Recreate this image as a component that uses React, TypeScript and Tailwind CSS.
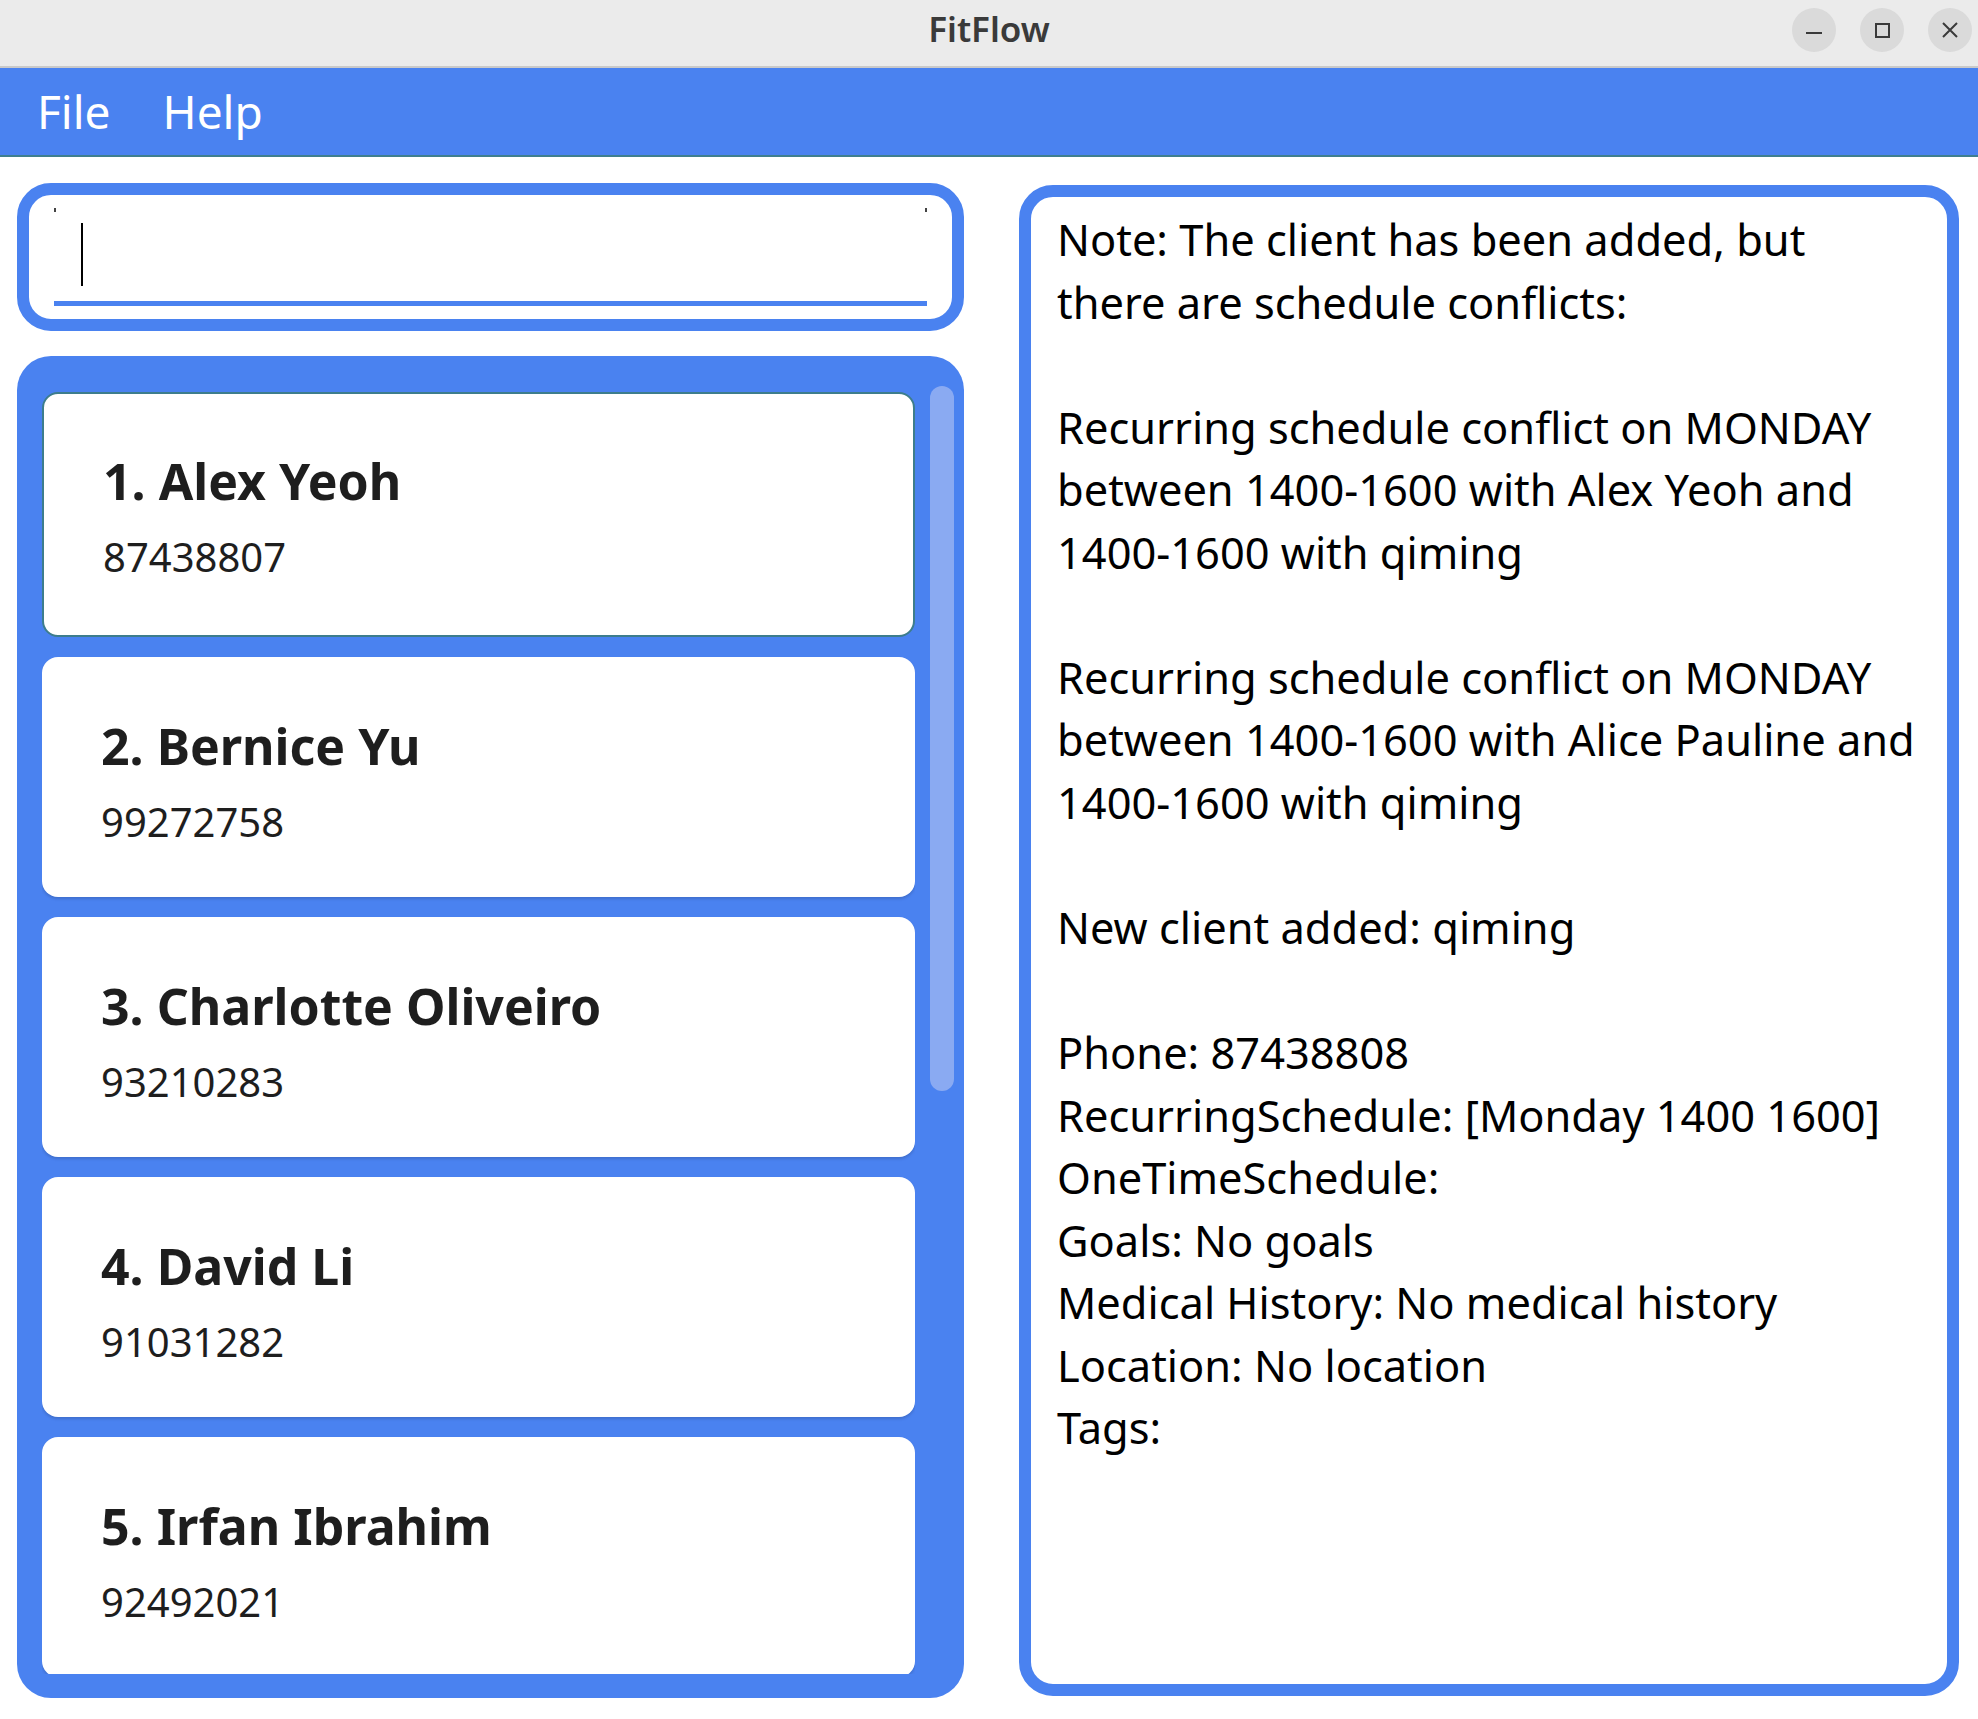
const clients = [
  { id: 1, name: 'Alex Yeoh', phone: '87438807' },
  { id: 2, name: 'Bernice Yu', phone: '99272758' },
  { id: 3, name: 'Charlotte Oliveiro', phone: '93210283' },
  { id: 4, name: 'David Li', phone: '91031282' },
  { id: 5, name: 'Irfan Ibrahim', phone: '92492021' },
];

const resultLines = [
  'Note: The client has been added, but',
  'there are schedule conflicts:',
  '',
  'Recurring schedule conflict on MONDAY',
  'between 1400-1600 with Alex Yeoh and',
  '1400-1600 with qiming',
  '',
  'Recurring schedule conflict on MONDAY',
  'between 1400-1600 with Alice Pauline and',
  '1400-1600 with qiming',
  '',
  'New client added: qiming',
  '',
  'Phone: 87438808',
  'RecurringSchedule: [Monday 1400 1600]',
  'OneTimeSchedule:',
  'Goals: No goals',
  'Medical History: No medical history',
  'Location: No location',
  'Tags:',
];

function TitleBar() {
  return (
    <div className="flex h-[68px] items-start border-b-2 border-[#c9c9c9] bg-[#ebebeb]">
      <div className="w-[420px]" />
      <div className="flex-1 pt-[5px] text-center text-[35px] leading-[48px] font-semibold text-[#3a3a3a]">FitFlow</div>
      <div className="flex w-[420px] justify-end gap-[24px] pr-[6px] pt-[8px]">
        <div className="flex h-[44px] w-[44px] items-center justify-center rounded-full bg-[#dadada]">
          <div className="mt-[6px] h-[2px] w-[16px] bg-[#3a3a3a]" />
        </div>
        <div className="flex h-[44px] w-[44px] items-center justify-center rounded-full bg-[#dadada]">
          <div className="h-[15px] w-[15px] border-2 border-[#3a3a3a]" />
        </div>
        <div className="flex h-[44px] w-[44px] items-center justify-center rounded-full bg-[#dadada]">
          <svg width="18" height="18" viewBox="0 0 18 18">
            <path d="M2 2 L16 16 M16 2 L2 16" stroke="#3a3a3a" strokeWidth="2" />
          </svg>
        </div>
      </div>
    </div>
  );
}

function MenuBar() {
  return (
    <div className="flex h-[89px] items-center gap-[52px] border-b-2 border-[#3f7f8f] bg-[#4a82f0] pl-[37px] text-[46px] text-white">
      <span>File</span>
      <span>Help</span>
    </div>
  );
}

function CommandBox() {
  return (
    <div className="h-[148px] rounded-[34px] border-[12px] border-[#4a82f0] bg-white px-[25px] pt-[13px]">
      <div className="flex h-[98px] flex-col">
        <div className="flex h-[4px] justify-between">
          <div className="h-[4px] w-[2px] bg-[#444]" />
          <div className="h-[4px] w-[2px] bg-[#444]" />
        </div>
        <div className="ml-[27px] mt-[11px] h-[63px] w-[2px] bg-black" />
        <div className="mt-auto h-[5px] bg-[#4a82f0]" />
      </div>
    </div>
  );
}

function ClientCard({ client, selected }: { client: (typeof clients)[number]; selected: boolean }) {
  return (
    <div
      className={
        selected
          ? 'h-[245px] shrink-0 rounded-[16px] border-2 border-[#3d7d8c] bg-white pl-[59px] pt-[57px] text-[#1e1e1e]'
          : 'h-[240px] shrink-0 rounded-[16px] bg-white pl-[59px] pt-[59px] text-[#1e1e1e] shadow-[0_2px_3px_rgba(0,0,0,0.15)]'
      }
    >
      <div className="text-[50px] font-bold leading-[60px]">
        {client.id}. {client.name}
      </div>
      <div className="mt-[22px] text-[40px] leading-[48px]">{client.phone}</div>
    </div>
  );
}

function ClientList() {
  return (
    <div className="mt-[25px] flex h-[1342px] items-start rounded-[34px] bg-[#4a82f0] pl-[25px]">
      <div className="mt-[36px] flex h-[1282px] w-[873px] flex-col gap-[20px] overflow-hidden">
        {clients.map((c) => (
          <ClientCard key={c.id} client={c} selected={c.id === 1} />
        ))}
      </div>
      <div className="ml-[15px] mt-[30px] h-[705px] w-[24px] rounded-full bg-[#8aaaf2]" />
    </div>
  );
}

function ResultPanel() {
  return (
    <div className="mt-[28px] h-[1511px] w-[940px] rounded-[34px] border-[12px] border-[#4a82f0] bg-white pl-[26px] pt-[12px] text-[43.4px] leading-[62.55px] text-black">
      {resultLines.map((line, i) => (
        <div key={i} className="h-[62.55px] whitespace-nowrap">
          {line}
        </div>
      ))}
    </div>
  );
}

export default function App() {
  return (
    <div className="h-[1719px] w-[1978px] overflow-hidden bg-white" style={{ fontFamily: '"Noto Sans", sans-serif' }}>
      <TitleBar />
      <MenuBar />
      <div className="flex">
        <div className="ml-[17px] mt-[26px] w-[947px]">
          <CommandBox />
          <ClientList />
        </div>
        <div className="ml-[55px]">
          <ResultPanel />
        </div>
      </div>
    </div>
  );
}
